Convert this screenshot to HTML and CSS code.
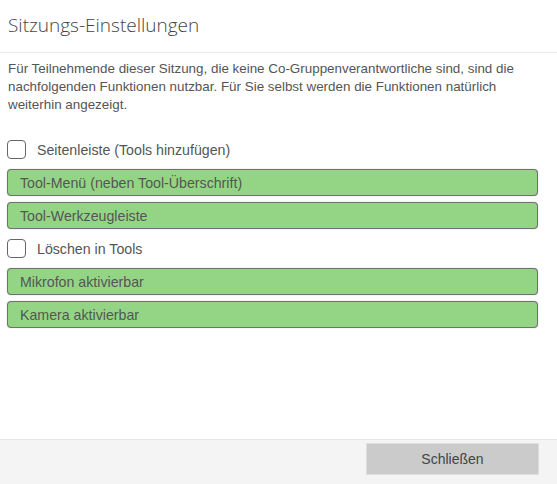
FILE: index.html
```html
<!DOCTYPE html>
<html lang="de">
<head>
    <meta charset="UTF-8">
    <title>Sitzungs-Einstellungen</title>
    <link rel="stylesheet" href="styles.css">
</head>
<body>
    <div class="dialog">
        <div class="header">
            <h1>Sitzungs-Einstellungen</h1>
        </div>
        <div class="content">
            <p class="intro">
                Für Teilnehmende dieser Sitzung, die keine Co-Gruppenverantwortliche sind, sind die
                nachfolgenden Funktionen nutzbar. Für Sie selbst werden die Funktionen natürlich
                weiterhin angezeigt.
            </p>
            <div class="options">
                <label class="option-check">
                    <span class="box"></span>
                    Seitenleiste (Tools hinzufügen)
                </label>
                <div class="option-on">Tool-Menü (neben Tool-Überschrift)</div>
                <div class="option-on">Tool-Werkzeugleiste</div>
                <label class="option-check">
                    <span class="box"></span>
                    Löschen in Tools
                </label>
                <div class="option-on">Mikrofon aktivierbar</div>
                <div class="option-on">Kamera aktivierbar</div>
            </div>
        </div>
        <div class="footer">
            <button type="button" class="close-button">Schließen</button>
        </div>
    </div>
</body>
</html>
```

FILE: styles.css
```css
body {
    margin: 0;
    padding: 0;
    background-color: #fff;
    font-family: 'Liberation Sans', Arial, sans-serif;
    color: #555;
}
.dialog {
    height: 484px;
    display: flex;
    flex-direction: column;
}
.header {
    height: 53px;
    border-bottom: 1px solid #eaeaea;
    box-sizing: border-box;
    padding: 0 8px;
}
.header h1 {
    margin: 0;
    padding-top: 13px;
    font-family: 'Open Sans', sans-serif;
    font-weight: 300;
    font-size: 19px;
    line-height: 25px;
    color: #444;
}
.content {
    flex: 1;
    padding: 7px 19px 0 8px;
}
.intro {
    margin: 0;
    font-size: 13.4px;
    line-height: 18px;
    color: #555;
}
.options {
    margin-top: 22px;
    display: flex;
    flex-direction: column;
    gap: 6px;
}
.option-check {
    height: 27px;
    display: flex;
    align-items: center;
    gap: 11px;
    font-size: 14.2px;
    color: #555;
}
.option-check .box {
    width: 19px;
    height: 19px;
    box-sizing: border-box;
    margin-left: -1px;
    border: 1px solid #666;
    border-radius: 4px;
    background-color: #fff;
}
.option-on {
    height: 27px;
    box-sizing: border-box;
    display: flex;
    align-items: center;
    padding-left: 12px;
    margin-left: -1px;
    background-color: #94d585;
    border: 1px solid #707070;
    border-radius: 4px;
    box-shadow: 0 0 1px #999;
    font-size: 14.2px;
    color: #555;
}
.footer {
    height: 45px;
    box-sizing: border-box;
    background-color: #f4f4f4;
    border-top: 1px solid #e6e6e6;
    padding: 3px 18px 0 0;
    display: flex;
    justify-content: flex-end;
    align-items: flex-start;
}
.close-button {
    width: 173px;
    height: 32px;
    background-color: #cbcbcb;
    border: 1px solid #dedede;
    font-family: 'Liberation Sans', Arial, sans-serif;
    font-size: 14px;
    color: #444;
    cursor: pointer;
}
```
